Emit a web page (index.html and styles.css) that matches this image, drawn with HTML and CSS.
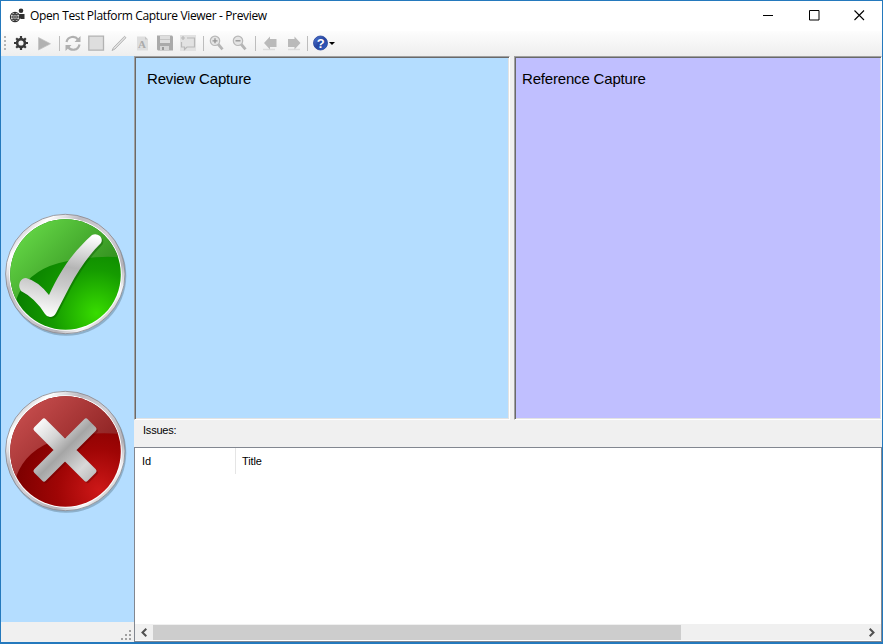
FILE: index.html
```html
<!DOCTYPE html>
<html lang="en">
<head>
<meta charset="utf-8">
<title>Open Test Platform Capture Viewer - Preview</title>
<link rel="stylesheet" href="styles.css">
</head>
<body>
<div class="window">
  <header class="titlebar">
    <svg class="app-icon" width="16" height="16" viewBox="0 0 16 16"><circle cx="12" cy="2.800" r="2.300" fill="#303030"/><path d="M9.500 6h6v5h-4z" fill="#303030"/><circle cx="6" cy="9" r="4.600" fill="#fff" stroke="#303030" stroke-width="1.100"/><path d="M6 4.500v9M1.500 9h9M2.500 6.600h7M2.500 11.400h7M6 4.500Q1.500 9 6 13.500M6 4.500Q10.500 9 6 13.500" fill="none" stroke="#303030" stroke-width=".9"/></svg>
    <h1 class="title">Open Test Platform Capture Viewer - Preview</h1>
    <div class="controls">
      <svg width="11" height="11"><path d="M0 5.500h10" stroke="#000"/></svg>
      <svg width="11" height="11"><path d="M.5.5h9.500v9.500h-9.500z" fill="none" stroke="#000"/></svg>
      <svg width="11" height="11"><path d="M.5.5l9.500 9.500M10 .5l-9.500 9.500" stroke="#000" stroke-width="1.1"/></svg>
    </div>
  </header>
  <nav class="toolbar">
    <span class="grip"></span>
    <span class="tool"><svg width="17" height="17" viewBox="0 0 17 17"><circle cx="8" cy="8" r="3.900" fill="none" stroke="#383838" stroke-width="2.600"/><path d="M8 1v3M8 12v3M1 8h3M12 8h3M3.200 3.200l2 2M10.800 10.800l2 2M3.200 12.800l2-2M10.800 5.200l2-2" stroke="#383838" stroke-width="2.200"/></svg></span>
    <span class="tool"><svg width="17" height="17" viewBox="0 0 17 17"><path d="M2.500 2.500l12 6.300-12 6.200z" fill="#b2b2b2" stroke="#c2c2c2" stroke-width=".7"/></svg></span>
    <span class="sep"></span>
    <span class="tool"><svg width="17" height="17" viewBox="0 0 17 17"><path d="M1.500 7C3 1 10 .5 13 4.500M14.500 9.500C13 16 6 16 3 12" fill="none" stroke="#b0b0b0" stroke-width="2.200"/><path d="M15.500 1v6h-6zM.5 16v-6h6z" fill="#b0b0b0"/></svg></span>
    <span class="tool"><svg width="17" height="17" viewBox="0 0 17 17"><path d="M.8 1.200h14.700v14H.8z" fill="#dedede" stroke="#b2b2b2" stroke-width="1.300"/></svg></span>
    <span class="tool"><svg width="17" height="17" viewBox="0 0 17 17"><path d="M1 15.500l1.500-3L13.500 1.300l1.500 1.400L4 14z" fill="#e0e0e0" stroke="#b0b0b0" stroke-width=".9"/></svg></span>
    <span class="tool"><svg width="17" height="17" viewBox="0 0 17 17"><path d="M3 1.500h8l3 3v11H3z" fill="#dedede"/><path d="M11 1.500v3h3" fill="#c5c5c5"/><text class="letter" x="4" y="12.500">A</text></svg></span>
    <span class="tool"><svg width="17" height="17" viewBox="0 0 17 17"><path d="M0 .5h15l1 1v14H1l-1-1z" fill="#aaa"/><path d="M3 1h10v7H3z" fill="#dedede"/><path d="M3 11h9v4H3z" fill="#d4d4d4"/><path d="M5 12h2v3H5z" fill="#999"/><path d="M3 4.500h10" stroke="#c5c5c5"/></svg></span>
    <span class="tool"><svg width="17" height="17" viewBox="0 0 17 17"><path d="M0 0h16v16H0z" fill="#e2e2e2"/><path d="M7 3h7.500v9H7l-2.500 2.500V12h-3V7M1 3h4M3 1v4" fill="none" stroke="#b8b8b8" stroke-width="1.200"/></svg></span>
    <span class="sep"></span>
    <span class="tool"><svg width="17" height="17" viewBox="0 0 17 17"><path d="M9 9l4.500 5.300" stroke="#b5b5b5" stroke-width="2.800"/><circle cx="6" cy="5.800" r="4.700" fill="#e4e4e4" stroke="#b8b8b8" stroke-width="1.200"/><path d="M3.500 5.800h5M6 3.300v5" stroke="#929292" stroke-width="1.300"/></svg></span>
    <span class="tool"><svg width="17" height="17" viewBox="0 0 17 17"><path d="M9 9l4.500 5.300" stroke="#b5b5b5" stroke-width="2.800"/><circle cx="6" cy="5.800" r="4.700" fill="#e4e4e4" stroke="#b8b8b8" stroke-width="1.200"/><path d="M3.500 5.800h5" stroke="#929292" stroke-width="1.300"/></svg></span>
    <span class="sep"></span>
    <span class="tool"><svg width="17" height="17" viewBox="0 0 17 17"><path d="M2 14.500h12" stroke="#dcdcdc" stroke-width="1.500"/><path d="M3 8l6-6.500V4h6.500v8H9v2.500z" fill="#bababa"/></svg></span>
    <span class="tool"><svg width="17" height="17" viewBox="0 0 17 17"><path d="M4 14.500h12" stroke="#dcdcdc" stroke-width="1.500"/><path d="M16.500 8l-6-6.500V4H4v8h6.500v2.500z" fill="#bababa"/></svg></span>
    <span class="sep"></span>
    <span class="tool help"><svg width="17" height="17" viewBox="0 0 17 17"><defs><linearGradient id="hb" x2="1" y2="1"><stop stop-color="#577bd5"/><stop offset=".5" stop-color="#2545a0"/><stop offset="1" stop-color="#3867cb"/></linearGradient></defs><circle cx="7.500" cy="8" r="7" fill="url(#hb)" stroke="#23429b" stroke-width=".8"/><text class="question" x="3.800" y="12.500">?</text></svg></span>
    <svg class="caret" width="6" height="3"><path d="M0 0h6L3 3z" fill="#000"/></svg>
  </nav>
  <main class="body">
    <aside class="side">
      <svg class="verdict pass" width="126" height="126" viewBox="0 0 126 126">
        <defs>
          <linearGradient id="rim" x1=".1" y1=".1" x2=".9" y2=".9"><stop stop-color="#bbb9c0"/><stop offset=".12" stop-color="#fff"/><stop offset=".28" stop-color="#bdbbc2"/><stop offset=".5" stop-color="#d3d1d7"/><stop offset=".75" stop-color="#b4b2b8"/><stop offset=".88" stop-color="#f8f8fa"/><stop offset="1" stop-color="#aaa"/></linearGradient>
          <radialGradient id="green" cx=".78" cy=".85" r=".78"><stop stop-color="#38dc00"/><stop offset=".5" stop-color="#159b00"/><stop offset="1" stop-color="#087b00"/></radialGradient>
          <linearGradient id="greenTop" x1=".2" y1="0" x2="1" y2=".6"><stop stop-color="#68dc49"/><stop offset="1" stop-color="#2b8419"/></linearGradient>
          <linearGradient id="metal" x1="0" y1="0" x2="1" y2="1"><stop stop-color="#fff"/><stop offset=".3" stop-color="#d4d4d4"/><stop offset=".5" stop-color="#a5a5a5"/><stop offset=".8" stop-color="#d8d8d8"/><stop offset="1" stop-color="#bbb"/></linearGradient>
          <linearGradient id="tick" gradientUnits="userSpaceOnUse" x1="75" y1="22" x2="60" y2="107"><stop stop-color="#fff"/><stop offset=".4" stop-color="#b5b5b5"/><stop offset=".62" stop-color="#cacaca"/><stop offset="1" stop-color="#fff"/></linearGradient>
          <clipPath id="disc"><circle cx="61.500" cy="62.500" r="55.300"/></clipPath>
        </defs>
        <circle cx="62.300" cy="63.700" r="60" fill="#668397" opacity=".5"/>
        <circle cx="61.300" cy="62" r="59.700" fill="url(#rim)" stroke="#88878d" stroke-width=".8"/>
        <circle cx="61.500" cy="62.500" r="56.300" fill="#fff"/>
        <circle cx="61.500" cy="62.500" r="55.300" fill="url(#green)"/>
        <path clip-path="url(#disc)" d="M0 0h126v46Q90 42 55 51Q22 60 12 88L0 95z" fill="url(#greenTop)"/>
        <path id="check" d="M88 23Q92 21 96 24Q99 27 97 31C84 44 74 59 66 74L52 101Q50 105 46 105Q43 105 41 102Q31 86 17 79Q14 75 16 70Q18 66 22 66Q34 69 45 83C56 60 66 43 88 23z" transform="translate(1.500 1.500)" fill="#075200" opacity=".4"/>
        <path d="M88 23Q92 21 96 24Q99 27 97 31C84 44 74 59 66 74L52 101Q50 105 46 105Q43 105 41 102Q31 86 17 79Q14 75 16 70Q18 66 22 66Q34 69 45 83C56 60 66 43 88 23z" fill="url(#tick)"/>
      </svg>
      <svg class="verdict fail" width="126" height="126" viewBox="0 0 126 126">
        <defs>
          <radialGradient id="red" cx=".8" cy=".85" r=".75"><stop stop-color="#cd1818"/><stop offset=".5" stop-color="#9f0505"/><stop offset="1" stop-color="#7d0000"/></radialGradient>
          <linearGradient id="redTop" x1=".2" y1="0" x2="1" y2=".6"><stop stop-color="#ca5050"/><stop offset="1" stop-color="#841c1c"/></linearGradient>
        </defs>
        <circle cx="62.300" cy="63.700" r="60" fill="#668397" opacity=".5"/>
        <circle cx="61.300" cy="62" r="59.700" fill="url(#rim)" stroke="#88878d" stroke-width=".8"/>
        <circle cx="61.500" cy="62.500" r="56.300" fill="#fff"/>
        <circle cx="61.500" cy="62.500" r="55.300" fill="url(#red)"/>
        <path clip-path="url(#disc)" d="M0 0h126v46Q90 41 55 50Q22 60 12 88L0 95z" fill="url(#redTop)"/>
        <path d="M40 32l21 21 21-21 8 8-21 21 21 21-8 8-21-21-21 21-8-8 21-21-21-21z" transform="translate(1.500 1.500)" fill="#590000" stroke="#590000" stroke-width="5" stroke-linejoin="round" opacity=".35"/>
        <path d="M40 32l21 21 21-21 8 8-21 21 21 21-8 8-21-21-21 21-8-8 21-21-21-21z" fill="url(#metal)" stroke="url(#metal)" stroke-width="5" stroke-linejoin="round"/>
      </svg>
      <div class="status"><svg width="11" height="11"><path d="M8 0h2v2H8zM4 4h2v2H4zM8 4h2v2H8zM0 8h2v2H0zM4 8h2v2H4zM8 8h2v2H8z" fill="#a0a0a0"/></svg></div>
    </aside>
    <section class="content">
      <div class="captures">
        <div class="panel review">Review Capture</div>
        <div class="panel reference">Reference Capture</div>
      </div>
      <div class="issues-label">Issues:</div>
      <div class="list">
        <div class="columns"><span class="col-id">Id</span><span class="col-title">Title</span></div>
        <div class="scrollbar">
          <span class="arrow"><svg width="7" height="9"><path d="M5.300 .8L1.500 4.500l3.800 3.700" fill="none" stroke="#505050" stroke-width="2"/></svg></span>
          <span class="thumb"></span>
          <span class="arrow end"><svg width="7" height="9"><path d="M1.700 .8L5.500 4.500 1.700 8.200" fill="none" stroke="#505050" stroke-width="2"/></svg></span>
        </div>
      </div>
    </section>
  </main>
</div>
</body>
</html>
```
FILE: styles.css
```css
* { box-sizing: border-box; }
body { margin: 0; font-family: "Liberation Sans", Arial, sans-serif; color: #000; }
svg { display: block; flex: none; }
.window { width: 883px; height: 644px; border: 1px solid #2479bd; border-bottom-width: 2px; background: #fff; display: flex; flex-direction: column; overflow: hidden; }
.titlebar { height: 30px; display: flex; align-items: center; padding: 0 17px 0 8px; flex: none; }
.title { margin: 0 0 0 5px; font: 400 12px/28px "Open Sans", "Noto Sans", sans-serif; letter-spacing: -0.35px; white-space: nowrap; }
.controls { margin-left: auto; display: flex; gap: 35px; margin-top: -1px; }
.controls svg:nth-child(2) { margin-right: -1px; }
.toolbar { height: 25px; flex: none; display: flex; align-items: center; padding-left: 3px; background: linear-gradient(#fdfdfd, #eee); }
.grip { width: 2px; height: 15px; margin-right: 4px; background: repeating-linear-gradient(#b5b5b5 0 2px, transparent 2px 4px); }
.tool { width: 23px; display: flex; justify-content: center; }
.sep { width: 6px; height: 15px; border-left: 3px solid transparent; background: linear-gradient(#bdbdbd, #bdbdbd) 0 0 / 1px 100% no-repeat padding-box; }
.letter { font: bold 11px "Liberation Serif", serif; fill: #aaa; }
.question { font: bold 13px "Liberation Sans", sans-serif; fill: #fff; }
.caret { margin-left: -4px; }
.body { flex: 1; display: flex; min-height: 0; }
.side { width: 133px; background: #b4ddff; display: flex; flex-direction: column; }
.verdict { margin-left: 3px; }
.pass { margin-top: 156px; }
.fail { margin-top: 51px; }
.status { margin-top: auto; height: 20px; background: #f0f0f0; display: flex; justify-content: flex-end; align-items: flex-end; padding: 0 2px 1px 0; }
.content { flex: 1; display: flex; flex-direction: column; background: #f0f0f0; min-width: 0; }
.captures { height: 364px; display: grid; grid-template-columns: 376px 368px; gap: 4px; flex: none; }
.panel { border: 1px solid #fff; border-top-color: #a0a0a0; border-left-color: #a0a0a0; box-shadow: inset 1px 1px #696969, inset -1px -1px #e3e3e3; font-size: 15px; letter-spacing: -0.18px; line-height: 18px; padding-top: 13px; white-space: nowrap; }
.review { background: #b4ddff; padding-left: 12px; }
.reference { background: #c0bfff; padding-left: 7px; }
.issues-label { height: 27px; padding: 4px 0 0 9px; font-size: 11px; letter-spacing: -0.2px; line-height: 13px; flex: none; }
.list { flex: 1; border: 1px solid #828790; background: #fff; display: flex; flex-direction: column; justify-content: space-between; }
.columns { display: flex; height: 26px; font-size: 11px; letter-spacing: -0.1px; line-height: 26px; }
.col-id { width: 101px; padding-left: 7px; border-right: 1px solid #e5e5e5; }
.col-title { padding-left: 6px; }
.scrollbar { height: 17px; background: #f0f0f0; display: flex; align-items: center; padding: 0 1px; border-bottom: 1px solid #fff; }
.arrow { width: 17px; display: flex; justify-content: center; }
.thumb { width: 528px; height: 15px; background: #cdcdcd; }
.end { margin-left: auto; }
```
